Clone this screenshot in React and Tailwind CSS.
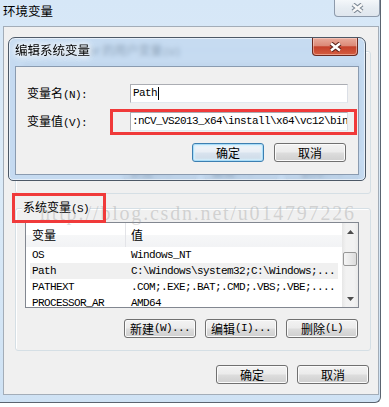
import React from 'react';

const mono = "font-['Liberation_Mono','Noto_Sans_CJK_SC',monospace] text-[11px] tracking-[-0.6px]";

const systemRows = [
  { name: 'OS', value: 'Windows_NT' },
  { name: 'Path', value: 'C:\\Windows\\system32;C:\\Windows;...', hot: true },
  { name: 'PATHEXT', value: '.COM;.EXE;.BAT;.CMD;.VBS;.VBE;....' },
  { name: 'PROCESSOR_AR', value: 'AMD64' },
];

const userRows = [
  { name: 'PATH', value: 'D:\\opencv\\build\\x64\\vc12\\bin' },
  { name: 'TEMP', value: '%USERPROFILE%\\AppData\\Local\\Temp' },
  { name: 'TMP', value: '%USERPROFILE%\\AppData\\Local\\Temp' },
];

// CJK part in the UI font, the half-width part in a narrow mono like SimSun
const Mixed = ({ cjk, latin }) => (
  <>
    {cjk}
    <span className={mono}>{latin}</span>
  </>
);

const XGlyph = ({ fill, stroke }) => (
  <svg width="13" height="10" viewBox="0 0 13 10">
    <path d="M2 1.5 L11 8.5 M11 1.5 L2 8.5" stroke={stroke} strokeWidth="4.6" strokeLinecap="butt" />
    <path d="M2 1.5 L11 8.5 M11 1.5 L2 8.5" stroke={fill} strokeWidth="2.4" strokeLinecap="butt" />
  </svg>
);

const Arrow = ({ up }) => (
  <svg width="7" height="4" viewBox="0 0 7 4">
    <path d={up ? 'M0 4 L3.5 0 L7 4 Z' : 'M0 0 L3.5 4 L7 0 Z'} fill="#4d4d4d" />
  </svg>
);

function Btn({ children, focus }) {
  return (
    <button
      className={`flex h-[19px] w-[72px] items-center justify-center rounded-[3px] border text-[12px] leading-none text-black ${
        focus
          ? 'border-[#3c7fb1] bg-[linear-gradient(180deg,#f2f6fa_0%,#e8eef5_48%,#d9e4ef_52%,#cdd9e6_100%)] shadow-[inset_0_0_0_1px_#a9dcf7,inset_0_0_2px_2px_#d6effc]'
          : 'border-[#707070] bg-[linear-gradient(180deg,#f3f3f3_0%,#ebebeb_48%,#dddddd_52%,#cfcfcf_100%)] shadow-[inset_0_0_0_1px_#fbfbfb]'
      }`}
    >
      {children}
    </button>
  );
}

function ListView({ rows }) {
  return (
    <div className="ml-[9px] mt-[13px] flex h-[86px] w-[334px] border border-[#828790] bg-white">
      <div className="flex min-w-0 flex-1 flex-col overflow-hidden">
        <div className="flex h-[24px] shrink-0 items-center bg-[linear-gradient(180deg,#ffffff_0%,#ffffff_50%,#f6f7f8_51%,#f2f3f5_100%)]">
          <span className="flex h-full w-[100px] items-center border-r border-[#e3e4e8] pl-[6px] text-[12px]">变量</span>
          <span className="pl-[5px] text-[12px]">值</span>
        </div>
        {rows.map((r) => (
          <div
            key={r.name}
            className={`mx-[4px] flex h-[16px] shrink-0 items-center whitespace-nowrap ${mono} ${r.hot ? 'bg-[#f0f0f0]' : ''}`}
          >
            <span className="w-[95px] pl-[2px]">{r.name}</span>
            <span className="pl-[6px]">{r.value}</span>
          </div>
        ))}
      </div>
      <div className="flex w-[16px] shrink-0 flex-col bg-[linear-gradient(90deg,#e6e6e6,#f2f2f2_25%,#f2f2f2_75%,#e9e9e9)]">
        <div className="flex h-[17px] items-center justify-center pt-[1px]">
          <Arrow up />
        </div>
        <div className="ml-[1px] mt-[12px] h-[14px] w-[14px] rounded-[2px] border border-[#979797] bg-[linear-gradient(90deg,#f5f5f5,#e9e9e9_50%,#dcdcdc)]" />
        <div className="flex-1" />
        <div className="flex h-[17px] items-center justify-center">
          <Arrow />
        </div>
      </div>
    </div>
  );
}

function GroupBox({ label, rows, className = '' }) {
  return (
    <div
      className={`relative h-[143px] shrink-0 rounded-[3px] border border-[#d5dfe5] shadow-[inset_1px_1px_0_#ffffff] ${className}`}
    >
      <span className="absolute left-[6px] top-[-10px] whitespace-nowrap bg-[#f0f0f0] px-[1px] text-[12px] leading-[16px]">
        {label}
      </span>
      <ListView rows={rows} />
      <div className="ml-[108px] mt-[11px] flex gap-[9px]">
        <Btn><Mixed cjk="新建" latin="(W)..." /></Btn>
        <Btn><Mixed cjk="编辑" latin="(I)..." /></Btn>
        <Btn><Mixed cjk="删除" latin="(L)" /></Btn>
      </div>
    </div>
  );
}

function EditDialog() {
  return (
    <div className="absolute left-[8px] top-[37px] flex h-[144px] w-[358px] flex-col rounded-b-[5px] rounded-t-[7px] border border-[#4c5866] bg-[rgba(184,211,240,0.76)] shadow-[inset_0_0_0_1px_rgba(255,255,255,0.55)] backdrop-blur-[2px]">
      <div className="flex h-[28px] shrink-0 items-start justify-between">
        <span className="pl-[6px] pt-[4px] text-[12.5px] leading-[16px] [text-shadow:0_0_6px_#fff,0_0_6px_#fff,0_0_10px_#fff]">
          编辑系统变量
        </span>
        <div className="mr-[7px] flex h-[18px] w-[46px] items-center justify-center rounded-b-[4px] border border-t-0 border-[#6b2a20] bg-[linear-gradient(180deg,#e9ab9c_0%,#dc8a78_45%,#c5412b_52%,#d45d40_100%)] shadow-[inset_0_0_0_1px_rgba(255,220,210,0.5)]">
          <XGlyph fill="#ffffff" stroke="#5c231a" />
        </div>
      </div>
      <div className="relative mx-[6px] h-[109px] shrink-0 border border-[#8a9bb0] bg-[#f0f0f0]">
        <div className="mt-[17px] flex h-[19px] items-center">
          <span className="w-[114px] pl-[11px] text-[12px]"><Mixed cjk="变量名" latin="(N):" /></span>
          <div className="flex h-[19px] w-[218px] items-center border border-[#abadb3] border-b-[#e3e9ef] border-r-[#dbdfe6] bg-white pl-[2px]">
            <span className={mono}>Path</span>
            <span className="ml-[1px] inline-block h-[13px] w-px bg-black" />
          </div>
        </div>
        <div className="mt-[9px] flex h-[19px] items-center">
          <span className="w-[114px] pl-[11px] text-[12px]"><Mixed cjk="变量值" latin="(V):" /></span>
          <div className="flex h-[19px] w-[218px] items-center overflow-hidden whitespace-nowrap border border-[#abadb3] border-b-[#e3e9ef] border-r-[#dbdfe6] bg-white pl-[1px]">
            <span className={mono}>{':nCV_VS2013_x64\\install\\x64\\vc12\\bin'}</span>
          </div>
        </div>
        <div className="mt-[12px] flex justify-end gap-[10px] pr-[12px]">
          <Btn focus>确定</Btn>
          <Btn>取消</Btn>
        </div>
        <div className="pointer-events-none absolute left-[94px] top-[42px] h-[26px] w-[247px] border-[3px] border-[#f03a3a]" />
      </div>
    </div>
  );
}

export default function App() {
  return (
    <div className="relative h-[407px] w-[389px] overflow-hidden bg-white font-['Noto_Sans_CJK_SC',sans-serif] text-[12px] text-black">
      <div className="flex h-[403px] w-[381px] flex-col rounded-br-[6px] border-b border-r border-[#5b6470] bg-[linear-gradient(180deg,#d6e7f7_0%,#dcebf8_40%,#cfe2f4_100%)]">
        <div className="flex h-[26px] shrink-0 items-start justify-between">
          <span className="pl-[3px] pt-[3px] text-[12.5px] leading-[16px]">环境变量</span>
          <div className="flex h-[17px] w-[46px] items-center justify-center rounded-b-[4px] border border-t-0 border-[#8d9aab] bg-[linear-gradient(180deg,#f4f7fa,#e6ecf2_50%,#dfe6ee)]">
            <XGlyph fill="#f7f7f7" stroke="#7b8794" />
          </div>
        </div>
        <div className="ml-[3px] mr-[1px] flex h-[369px] shrink-0 flex-col border border-[#a3adb8] bg-[#f0f0f0] pl-[11px] pr-[7px]">
          <GroupBox className="mt-[24px]" label={<Mixed cjk="Administrator 的用户变量" latin="(U)" />} rows={userRows} />
          <GroupBox className="mt-[14px]" label={<Mixed cjk="系统变量" latin="(S)" />} rows={systemRows} />
          <div className="mt-[14px] flex justify-end gap-[9px] pr-[2px]">
            <Btn>确定</Btn>
            <Btn>取消</Btn>
          </div>
        </div>
      </div>

      <EditDialog />

      <div className="pointer-events-none absolute left-[40px] top-[201px] whitespace-nowrap font-['Liberation_Serif',serif] text-[20px] leading-[24px] tracking-[1.8px] text-[rgba(150,150,150,0.35)]">
        http://blog.csdn.net/u014797226
      </div>

      <div className="pointer-events-none absolute left-[12px] top-[193px] h-[30px] w-[94px] border-[3px] border-[#f03a3a]" />
    </div>
  );
}
